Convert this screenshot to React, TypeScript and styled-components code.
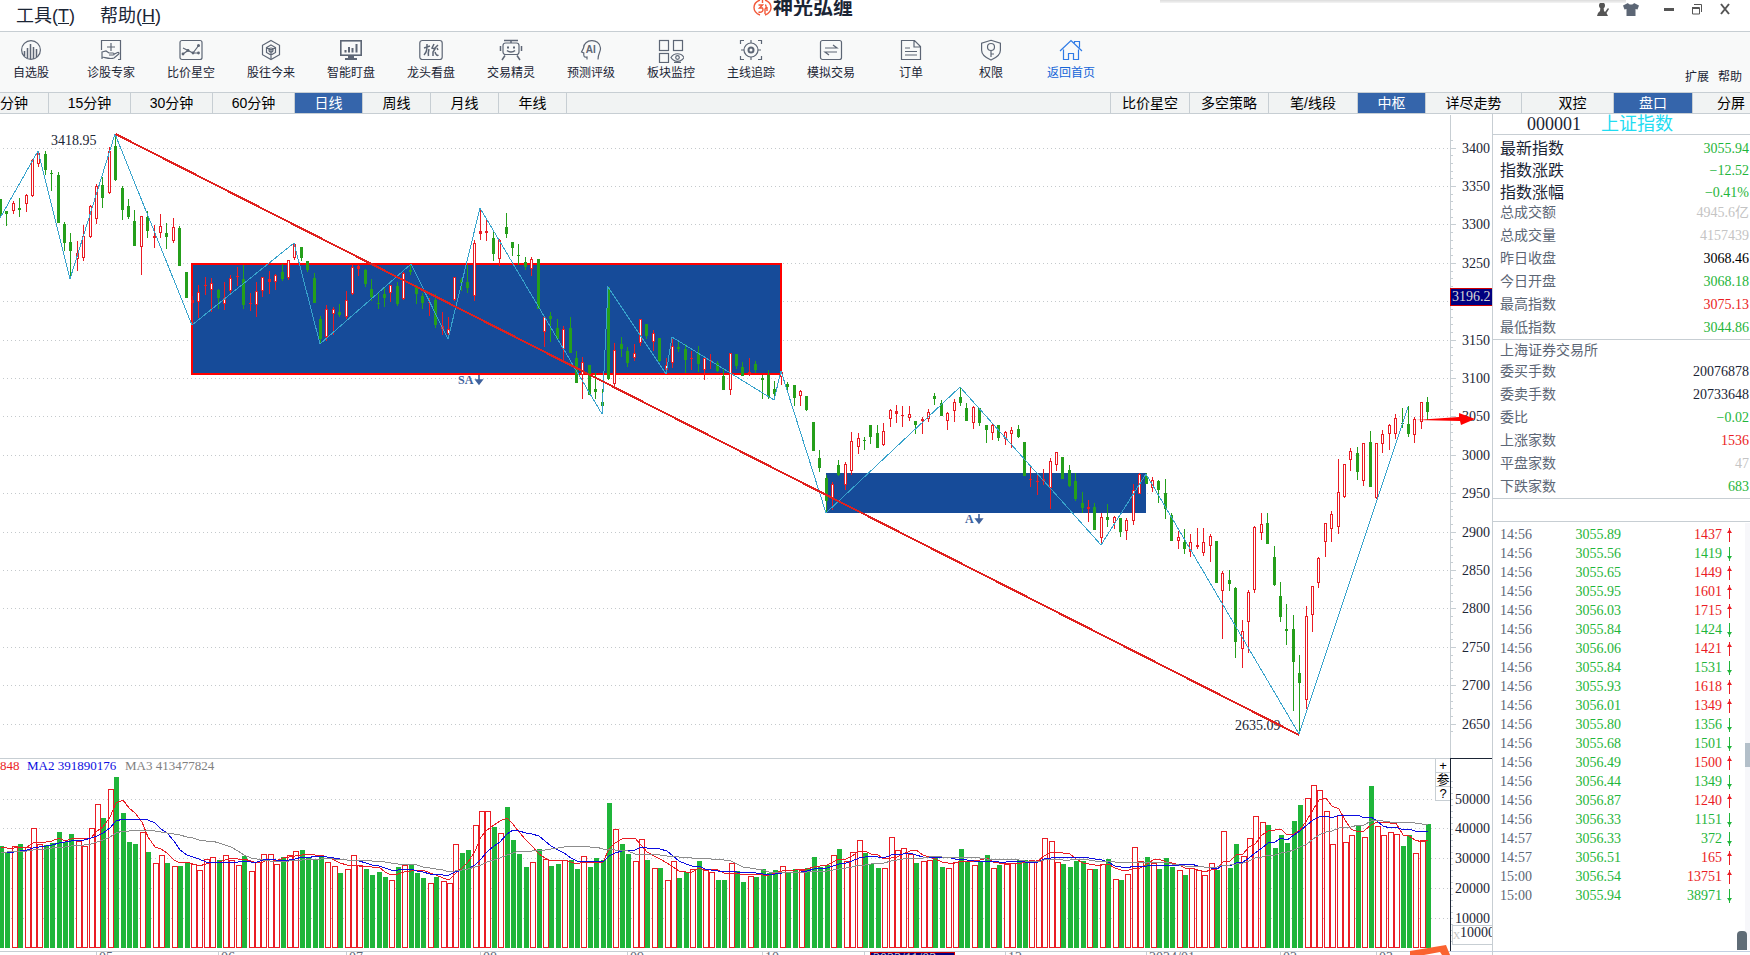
import React from "react";
import styled, { createGlobalStyle, css } from "styled-components";

const color = {
  line: "#c7ced3",
  ink: "#1b2535",
  muted: "#5c6675",
  faint: "#c4c4c4",
  up: "#ea1c24",
  down: "#1fb53a",
  candleDown: "#259f1b",
  active: "#3565ab",
  zone: "#164b99",
  stroke: "#38a3cc",
};

const sans = `"Liberation Sans", "Noto Sans CJK SC", sans-serif`;
const figures = `"Liberation Serif", "Noto Sans CJK SC", serif`;

const GlobalStyle = createGlobalStyle`
  html, body { margin: 0; padding: 0; background: #fff; }
  body { font-family: ${sans}; color: ${color.ink}; overflow: hidden; }
  button { font: inherit; color: inherit; background: none; border: 0; padding: 0; margin: 0; cursor: pointer; }
`;

/* ---------- market data: [up, high, body top, body bottom, low] in chart units ---------- */

type Candle = [number, number, number, number, number];

const candles: Candle[] = [
  [0,199,199,216,216],[0,211,211,214,226],[1,201,203,211,214],[0,198,208,210,217],[1,194,195,204,212],
  [1,159,160,196,197],[1,151,153,164,167],[0,151,154,170,175],[0,170,173,174,191],[0,172,175,223,223],
  [0,222,224,243,251],[0,233,242,251,277],[1,241,253,259,271],[1,225,236,258,261],[1,205,206,237,238],
  [1,184,186,219,224],[0,177,185,198,208],[1,147,151,193,194],[0,134,146,180,181],[0,186,188,210,220],
  [0,199,206,217,219],[0,210,221,246,246],[1,216,216,247,275],[0,211,217,231,238],[1,225,236,238,248],
  [1,214,226,233,238],[0,223,233,237,249],[1,218,227,241,243],[0,226,228,266,266],[0,272,272,298,298],
  [1,296,300,303,323],[1,285,292,302,318],[1,277,285,286,295],[1,278,283,290,312],[0,289,290,298,309],
  [1,282,298,304,310],[1,275,278,291,293],[1,267,276,277,286],[0,265,279,305,309],[1,293,303,304,311],
  [1,282,291,305,317],[1,277,277,291,297],[1,271,279,282,294],[1,274,275,282,290],[0,264,272,279,281],
  [1,260,260,278,280],[1,243,244,258,260],[0,247,247,258,261],[0,261,261,270,272],[0,273,278,303,303],
  [0,316,319,339,343],[1,305,309,337,341],[1,307,309,314,335],[0,304,312,315,317],[1,291,300,317,319],
  [1,265,267,294,295],[1,265,266,269,276],[0,269,270,284,287],[0,279,289,297,301],[0,293,303,304,309],
  [0,288,294,298,307],[1,285,285,293,302],[0,282,286,304,306],[1,272,273,299,300],[0,264,270,272,275],
  [0,285,287,294,304],[0,293,296,303,309],[1,298,302,303,316],[0,294,300,325,328],[1,312,326,329,335],
  [1,317,329,334,338],[1,277,277,300,301],[0,278,280,283,291],[0,265,282,288,293],[1,240,243,296,301],
  [1,209,231,234,240],[1,220,231,233,241],[0,231,238,254,261],[1,239,240,259,266],[0,213,227,234,238],
  [0,242,242,248,256],[0,244,255,256,265],[0,257,262,267,270],[1,257,259,269,276],[0,259,259,309,309],
  [1,316,317,332,347],[0,312,316,319,342],[0,319,328,339,340],[1,326,329,349,361],[0,317,328,353,353],
  [0,351,358,383,383],[1,357,362,375,399],[0,365,365,395,395],[0,373,389,392,399],[0,389,402,406,413],
  [0,287,287,379,380],[1,343,350,384,386],[0,337,344,349,357],[0,347,351,363,367],[1,344,353,358,361],
  [1,319,319,343,346],[0,324,324,336,339],[1,330,333,342,351],[0,338,338,361,362],[1,358,365,370,374],
  [1,339,346,363,368],[0,340,347,349,352],[0,344,349,360,373],[1,351,358,359,370],[0,346,353,364,372],
  [1,357,358,370,380],[1,354,360,361,369],[0,361,363,371,372],[0,369,376,390,390],[1,353,353,390,395],
  [0,354,354,366,369],[0,362,367,376,376],[1,358,372,375,376],[0,361,364,370,373],[0,375,378,380,399],
  [0,370,375,397,399],[0,381,389,394,400],[1,371,372,377,385],[0,382,384,387,393],[0,385,385,398,406],
  [1,390,391,396,406],[0,396,396,410,411],[0,422,422,451,451],[0,450,458,468,472],[0,475,478,501,513],
  [1,482,484,498,510],[0,460,465,475,476],[1,462,464,485,490],[1,432,441,471,475],[1,433,438,447,454],
  [0,437,440,441,450],[0,425,425,437,444],[0,425,433,448,448],[1,423,431,445,446],[1,409,410,419,427],
  [1,405,411,414,423],[1,406,415,416,427],[1,406,414,418,421],[0,421,421,425,434],[1,417,419,421,434],
  [1,409,412,419,422],[0,393,396,399,405],[0,400,403,416,416],[1,412,413,421,430],[1,399,402,411,422],
  [0,387,397,403,406],[0,403,408,421,421],[1,406,407,423,429],[0,408,408,423,426],[0,425,425,430,443],
  [1,424,425,433,440],[0,425,425,438,441],[1,431,432,439,445],[1,427,430,434,448],[0,425,429,437,438],
  [0,442,442,476,476],[1,466,479,480,487],[1,473,481,482,495],[1,469,479,481,485],[1,458,461,488,509],
  [1,452,452,465,471],[0,457,457,479,479],[0,465,470,486,487],[0,473,481,499,501],[0,492,503,508,513],
  [1,500,507,509,522],[0,503,507,530,530],[1,513,517,538,545],[0,504,517,520,527],[1,516,517,523,529],
  [0,518,518,532,537],[1,518,520,531,540],[1,484,490,521,525],[1,473,474,494,494],[0,473,476,484,484],
  [1,477,480,488,492],[0,480,481,490,503],[0,479,493,509,519],[0,513,515,541,541],[1,531,537,541,549],
  [0,529,542,549,554],[1,534,542,552,557],[1,528,545,547,549],[1,528,542,553,556],[1,534,536,546,562],
  [0,541,541,583,583],[1,571,573,591,639],[0,570,580,584,591],[0,587,588,642,658],[1,620,631,649,668],
  [1,590,592,622,653],[1,526,527,590,593],[1,513,524,533,540],[0,513,523,544,544],[0,546,557,585,586],
  [0,582,596,617,622],[0,604,629,631,645],[0,615,629,662,711],[0,655,673,683,734],[1,606,616,700,709],
  [1,586,586,615,632],[1,557,558,583,588],[1,523,523,542,557],[1,511,514,529,542],[1,459,492,527,534],
  [1,464,464,497,498],[1,448,451,460,471],[0,447,453,472,480],[1,443,443,481,486],[0,431,442,487,487],
  [1,443,443,498,499],[1,430,434,444,453],[1,424,425,434,450],[1,414,418,434,439],[0,408,423,424,428],
  [0,406,424,434,437],[1,417,419,435,443],[1,402,402,422,429],[0,397,402,412,420],
];

const volumeTops = [
  846,852,846,844,847,828,844,845,843,832,842,834,841,846,828,804,818,789,777,813,
  842,844,832,852,863,855,863,866,866,862,864,870,859,857,860,855,860,865,856,871,
  862,854,854,864,857,855,851,850,858,859,856,862,866,873,869,855,865,869,875,872,
  877,880,867,865,865,873,878,883,877,881,883,844,853,850,825,811,811,827,833,807,
  840,854,867,862,849,859,866,864,860,860,869,856,867,858,860,803,829,844,854,861,
  839,860,868,868,880,861,878,872,869,861,870,872,880,880,863,871,882,876,877,869,
  873,870,866,872,869,870,868,857,867,865,855,849,861,852,840,853,864,868,868,837,
  850,848,854,863,861,860,857,867,868,862,849,862,865,861,855,868,865,864,863,860,
  860,860,860,838,841,862,864,867,861,861,869,869,864,859,879,880,874,847,861,857,
  863,869,858,867,870,875,868,870,875,863,870,831,868,844,856,838,816,822,825,848,
  835,843,821,805,798,785,790,811,844,815,842,835,825,837,786,826,835,832,834,846,
  835,853,840,824,
];

const barX = (i: number) => Math.floor(0.4 + 6.4 * i);

const movingAverage = (span: number, before: number) =>
  volumeTops
    .map((_, i) => {
      let sum = 0;
      for (let k = i - span + 1; k <= i; k++) sum += k < 0 ? before : volumeTops[k];
      return `${barX(i) + 1},${Math.round(sum / span)}`;
    })
    .join(" ");

const swings =
  "0,218 38,151 70,279 115,134 192,325 294,243 320,344 411,264 448,339 480,208 602,414 608,287 666,374 672,337 774,400 781,371 826,513 960,387 1101,545 1146,474 1299,734 1408,407";

const PLOT_RIGHT = 1450;
const CHART_WIDTH = 1492;

/* ---------- page frame ---------- */

const Page = styled.div`
  display: flex;
  flex-direction: column;
  background: #fff;
`;

const TitleBar = styled.header`
  position: relative;
  display: grid;
  grid-template-columns: 1fr auto 1fr;
  height: 31px;
  border-bottom: 1px solid ${color.line};
`;

const Menu = styled.nav`
  display: flex;
  gap: 25px;
  padding-left: 16px;
  height: 28px;
  font-size: 18px;
`;

const Brand = styled.div`
  display: flex;
  align-items: center;
  height: 16px;
  margin-right: 144px;
  overflow: hidden;
  font-size: 20px;
  font-weight: 700;
  line-height: 16px;
  svg { margin-right: 1px; flex: none; }
`;

const WindowControls = styled.div`
  display: flex;
  justify-content: flex-end;
  align-items: center;
  height: 17px;
  padding-right: 11px;
  button { display: flex; justify-content: center; width: 28px; }
`;

const ControlGap = styled.span`
  width: 10px;
`;

const TopShadow = styled.div`
  position: absolute;
  top: 0;
  left: 1160px;
  right: 124px;
  height: 3px;
  background: linear-gradient(#dcdcdc, #f4f4f4);
`;

const Toolbar = styled.div`
  display: flex;
  height: 60px;
  background: #f8f9f9;
  border-bottom: 1px solid ${color.line};
  overflow: hidden;
`;

const ToolList = styled.div`
  display: flex;
  flex: 1;
  margin-left: -9px;
`;

const Tool = styled.button<{ $accent?: boolean }>`
  display: flex;
  flex-direction: column;
  align-items: center;
  flex: none;
  width: 80px;
  height: 60px;
  font-size: 12px;
  line-height: 18px;
  padding-top: 7px;
  color: ${(p) => (p.$accent ? "#1565d8" : color.ink)};
  svg { height: 24px; margin-bottom: 1px; color: ${(p) => (p.$accent ? "#2f7be6" : "#5d6675")}; }
`;

const ToolLinks = styled.div`
  display: flex;
  align-items: flex-end;
  gap: 9px;
  padding: 0 8px 7px 0;
  font-size: 12px;
  line-height: 16px;
`;

const TabBar = styled.div`
  display: flex;
  height: 20px;
  background: #f1f3f3;
  border-bottom: 1px solid ${color.line};
`;

const Tab = styled.button<{ $width: number; $active?: boolean; $edge?: "left" | "right"; $indent?: number }>`
  box-sizing: border-box;
  flex: none;
  width: ${(p) => p.$width}px;
  height: 20px;
  padding-left: ${(p) => p.$indent ?? 0}px;
  border-right: 1px solid ${color.line};
  font-size: 14px;
  line-height: 20px;
  white-space: nowrap;
  text-align: ${(p) => p.$edge ?? "center"};
  ${(p) => p.$edge === "right" && css`padding-right: 5px; border-right: 0;`}
  color: ${(p) => (p.$active ? "#fff" : "#000")};
  background: ${(p) => (p.$active ? color.active : "transparent")};
`;

const TabFill = styled.div`
  flex: 1;
  border-right: 1px solid ${color.line};
`;

const Workspace = styled.main`
  display: flex;
  align-items: stretch;
`;

const ChartColumn = styled.section`
  flex: 1;
  min-width: 0;
`;

const ChartSvg = styled.svg`
  display: block;
  width: 100%;
  height: auto;
  font-family: ${figures};
  font-size: 14px;
`;

const VolumePane = styled.div`
  position: relative;
`;

const PaneButtons = styled.div`
  position: absolute;
  top: 1px;
  right: 42px;
  width: 14px;
  display: flex;
  flex-direction: column;
  background: #fff;
  border-left: 1px solid ${color.line};
  button {
    height: 14px;
    border-bottom: 1px solid ${color.line};
    font-size: 13px;
    line-height: 13px;
    color: #000;
    overflow: hidden;
  }
`;

/* ---------- quote panel ---------- */

const Panel = styled.aside`
  position: relative;
  flex: none;
  box-sizing: border-box;
  width: 258px;
  border-left: 1px solid ${color.line};
  font-family: ${figures};
`;

const Symbol = styled.h1`
  display: flex;
  gap: 20px;
  margin: 0;
  padding-left: 34px;
  height: 20px;
  border-bottom: 1px solid ${color.line};
  font-size: 18px;
  font-weight: 400;
  line-height: 20px;
  span { color: #1fdcf2; }
`;

const Quotes = styled.table`
  width: 100%;
  border-collapse: collapse;
  border-bottom: 1px solid ${color.line};
  font-size: 14px;
`;

type Tone = "up" | "down" | "ink" | "faint" | "black";
const toneColor = (t: Tone) => (t === "black" ? "#000" : color[t]);

const QuoteRow = styled.tr<{ $lead?: boolean; $short?: boolean }>`
  th, td {
    padding: ${(p) => (p.$lead ? "5px 1px 0 7px" : "0 1px 0 7px")};
    height: ${(p) => (p.$lead ? 17 : p.$short ? 20 : 23)}px;
    line-height: 17px;
    vertical-align: middle;
  }
  th {
    font-weight: 400;
    text-align: left;
    font-size: ${(p) => (p.$lead ? 16 : 14)}px;
    color: ${(p) => (p.$lead ? color.ink : color.muted)};
  }
`;

const Value = styled.td<{ $tone: Tone }>`
  text-align: right;
  color: ${(p) => toneColor(p.$tone)};
`;

const Spacer = styled.div`
  height: 22px;
  border-bottom: 1px solid ${color.line};
`;

const Trades = styled.table`
  margin: 3px 0 0 7px;
  border-collapse: collapse;
  table-layout: fixed;
  width: 236px;
  font-size: 14px;
  td { padding: 0; height: 19px; line-height: 18px; }
  svg { display: block; margin-left: 5px; }
`;

const Time = styled.td`
  width: 60px;
  color: ${color.muted};
`;

const Price = styled.td`
  width: 61px;
  text-align: right;
  color: ${color.down};
`;

const Lots = styled.td<{ $up: boolean }>`
  width: 101px;
  text-align: right;
  color: ${(p) => (p.$up ? color.up : color.down)};
`;

const ScrollTrack = styled.div`
  position: absolute;
  top: 409px;
  right: 0;
  bottom: 5px;
  width: 5px;
  background: #f7f7fa;
`;

const ScrollThumb = styled.div`
  margin-top: 220px;
  height: 24px;
  background: #b3bfc9;
`;

const Grip = styled.div`
  position: absolute;
  right: 3px;
  bottom: 5px;
  width: 10px;
  height: 19px;
  border-radius: 4px 4px 0 0;
  background: #5f6c76;
`;

const PanelFoot = styled.div`
  position: absolute;
  left: 0;
  right: 0;
  bottom: 3px;
  height: 1px;
  background: #c3cfe2;
`;

/* ---------- icons ---------- */

const Glyph = ({ children, w = 24 }: { children: React.ReactNode; w?: number }) => (
  <svg width={w} height="24" viewBox={`0 0 ${w} 24`} fill="none" stroke="currentColor" strokeWidth="1.2" aria-hidden="true">
    {children}
  </svg>
);

const icons: Record<string, React.ReactNode> = {
  stocks: (
    <Glyph>
      <circle cx="12" cy="11" r="9.4" />
      <path d="M5.500 17V12M8.500 19V9M11.500 20V5M14.500 20V8M17.500 18V10" strokeWidth="1.500" />
    </Glyph>
  ),
  doctor: (
    <Glyph>
      <path d="M2.500 11V1.500H21.500V20.500H19M12 4v8M8 8h8" />
      <path d="M3 12.500V20M3 13l4-1 3 2h4c1.500 0 1.500 2 0 2h-4M14.500 15.500l4-2c1.500-.3 2 1 1 1.800l-4.500 3.700c-4 1.500-8-.3-12-1" />
    </Glyph>
  ),
  compare: (
    <Glyph>
      <rect x="1" y="1.500" width="22" height="19" rx="2" />
      <path d="M4 15l5-3.500 5 2.500 6-8M4 9l5 2.500M14 14h6" />
      <g fill="currentColor" stroke="none">
        <circle cx="4" cy="15" r="1.400" /><circle cx="9" cy="11.500" r="1.400" /><circle cx="14" cy="14" r="1.400" />
        <circle cx="19.500" cy="6.500" r="1.500" /><circle cx="19.500" cy="14" r="1.400" />
      </g>
    </Glyph>
  ),
  cube: (
    <Glyph>
      <path d="M12 1.500l8.500 4.800v9.400L12 20.500l-8.500-4.800V6.300z" />
      <path d="M12 6l4.500 2.500v5L12 16l-4.500-2.500v-5zM7.500 8.500L12 11l4.500-2.500M12 11v9" />
      <circle cx="12" cy="11" r="2" />
    </Glyph>
  ),
  monitor: (
    <Glyph>
      <rect x="1.800" y="1.800" width="20.400" height="14.400" strokeWidth="1.600" />
      <path d="M6.500 13.500V11M10 13.500V8M13.500 13.500V9M17.500 13.500V5" strokeWidth="2" />
      <path d="M9 17h6v2h3v2H6v-2h3z" fill="currentColor" stroke="none" />
    </Glyph>
  ),
  dragon: (
    <Glyph>
      <rect x="0.800" y="1.500" width="22.400" height="19" rx="2.500" />
      <path d="M5 9l6-2M8 5c0 5 0 8-3 11M10 10c-.5 2-1 5-.5 7M15 5l-2 4 3 1-2 3v4M19 6l-4 4M16 13c1 3 2 4 3.500 3M18 9l1 2" strokeWidth="1.500" />
    </Glyph>
  ),
  robot: (
    <Glyph>
      <rect x="4" y="4" width="16" height="11.500" rx="2.500" />
      <path d="M5 1.500h14M12 1.500V4M1.500 7v5M22.500 7v5M6 16.500L3 21M18 16.500l3 4.500M8 11.500c2 2 6 2 8 0" strokeWidth="1.500" />
      <path d="M8 8.500h2M14 8.500h2" strokeWidth="2" />
    </Glyph>
  ),
  ai: (
    <Glyph>
      <path d="M8 20.500v-2.500c-3 .5-3.500-.5-3.200-4L2.500 13l2-4c0-9 16-10.500 17 0 .3 4-2.500 5-2.500 11.500" />
      <text x="11.800" y="14" textAnchor="middle" fontSize="10" fontWeight="700" fontFamily="Liberation Sans, sans-serif" fill="currentColor" stroke="none">AI</text>
    </Glyph>
  ),
  blocks: (
    <Glyph w={26}>
      <rect x="1.500" y="1.500" width="9" height="10" /><rect x="15.500" y="1.500" width="9" height="10" /><rect x="1.500" y="14.500" width="9" height="9" />
      <path d="M13 18.500c3-5 10-5 13 0-3 5-10 5-13 0zM16 23.400h7" />
      <circle cx="19.500" cy="18.500" r="1.800" />
    </Glyph>
  ),
  track: (
    <Glyph>
      <path d="M1.500 5V1.500H5M19 1.500h3.500V5M22.500 17v3.500H19M5 20.500H1.500V17M12 1v3M12 18v3M2 11h3M19 11h3" />
      <circle cx="12" cy="11" r="7" /><circle cx="12" cy="11" r="2.500" strokeWidth="2" />
    </Glyph>
  ),
  trade: (
    <Glyph>
      <rect x="1.500" y="1.500" width="21" height="19" rx="2" />
      <path d="M6 9h12l-4-3M18 13H6l4 3" />
    </Glyph>
  ),
  order: (
    <Glyph>
      <path d="M2.500 1.500h13l6 6v13h-19zM15 2v6h6M6 9h5M6 12.500h12M6 16h12" />
    </Glyph>
  ),
  shield: (
    <Glyph>
      <path d="M12 1.300l9.400 3v7c0 5-4 7.500-9.400 9.700-5.400-2.200-9.400-4.700-9.400-9.700v-7z" />
      <circle cx="12" cy="8" r="3.500" /><path d="M12 11.500V18M12 15h3" />
    </Glyph>
  ),
  home: (
    <Glyph>
      <path d="M1 12L12 1.500 23 12M4.500 10.500v10h5V14.500h5v6h5v-10M15.500 4V2.500H20.500V8.500" />
    </Glyph>
  ),
};

const tools: [string, string][] = [
  ["stocks", "自选股"], ["doctor", "诊股专家"], ["compare", "比价星空"], ["cube", "股往今来"],
  ["monitor", "智能盯盘"], ["dragon", "龙头看盘"], ["robot", "交易精灵"], ["ai", "预测评级"],
  ["blocks", "板块监控"], ["track", "主线追踪"], ["trade", "模拟交易"], ["order", "订单"],
  ["shield", "权限"], ["home", "返回首页"],
];

/* ---------- charts ---------- */

const axisPrices = Array.from({ length: 16 }, (_, i) => 3400 - i * 50);
const priceY = (p: number) => Math.floor(148 + (3400 - p) * 0.768);
const axisVolumes = [50000, 40000, 30000, 20000, 10000];
const volumeY = (v: number) => Math.floor(799 + (50000 - v) * 0.00298);

const DownMark = ({ x, y }: { x: number; y: number }) => (
  <path d={`M${x} ${y}v8M${x - 3} ${y + 5}h6l-3 4z`} stroke="#3f629d" strokeWidth="1.600" fill="#3f629d" />
);

const PriceChart = () => (
  <ChartSvg viewBox={`0 114 ${CHART_WIDTH} 644`} role="img" aria-label="上证指数 日线">
    <g shapeRendering="crispEdges">
      {axisPrices.map((p) => (
        <line key={p} x1="3" x2={PLOT_RIGHT} y1={priceY(p) + 0.5} y2={priceY(p) + 0.5} stroke="#c4c9cc" strokeDasharray="1 3" />
      ))}
      <rect x="192" y="264" width="589" height="110" fill={color.zone} stroke="#ff0000" strokeWidth="2" />
      <rect x="826" y="473" width="320" height="40" fill={color.zone} />
      {candles.map(([up, high, top, bottom, low], i) => {
        const x = barX(i);
        const tone = up ? color.up : color.candleDown;
        return (
          <g key={i} fill={tone}>
            <rect x={x} y={high} width="1" height={Math.max(1, low - high)} />
            <rect x={x - 1} y={top} width="3" height={Math.max(1, bottom - top)} />
            {up === 1 && bottom - top > 3 && <rect x={x} y={top + 1} width="1" height={bottom - top - 2} fill="#fff" />}
          </g>
        );
      })}
      <polyline points={swings} fill="none" stroke={color.stroke} />
      <line x1="1450.500" x2="1450.500" y1="115" y2="758" stroke={color.line} />
      {Array.from({ length: 78 }, (_, i) => Math.round(140 + i * 7.68)).map((y) => (
        <line key={y} x1="1451" x2="1453" y1={y + 0.5} y2={y + 0.5} stroke={color.line} />
      ))}
      {axisPrices.map((p) => (
        <line key={p} x1="1451" x2="1456" y1={priceY(p) + 0.5} y2={priceY(p) + 0.5} stroke={color.line} />
      ))}
    </g>
    <g fill={color.ink}>
      <text x="51" y="145">3418.95</text>
      <text x="1235" y="730">2635.09</text>
      {axisPrices.filter((p) => p !== 3200).map((p) => (
        <text key={p} x="1490" y={priceY(p) + 5} textAnchor="end">{p}</text>
      ))}
    </g>
    <g fill="#3f629d" fontSize="12" fontWeight="700">
      <text x="458" y="384">SA</text>
      <text x="965" y="523">A</text>
    </g>
    <DownMark x={479} y={375} />
    <DownMark x={979} y={514} />
    <line x1="115.500" y1="134" x2="1299" y2="735" stroke="#e0211f" strokeWidth="2" shapeRendering="crispEdges" />
    <rect x="1450.500" y="288.500" width="44" height="17" fill="#000080" stroke="#d00000" shapeRendering="crispEdges" />
    <text x="1452" y="301" fill="#d6d6d6">3196.2</text>
    <path d="M1416 420l43-3v-4l16 6-14 6-1-4z" fill="#ff0000" />
  </ChartSvg>
);

const months: [number, string][] = [
  [96, "05"], [218, "06"], [346, "07"], [480, "08"], [627, "09"], [762, "10"], [864, ""],
  [1005, "12"], [1146, "2024/01"], [1280, "02"], [1376, "03"],
];

const VolumeChart = () => (
  <ChartSvg viewBox={`0 758 ${CHART_WIDTH} 197`} role="img" aria-label="成交量">
    <g shapeRendering="crispEdges">
      <line x1="0" x2={PLOT_RIGHT} y1="758.500" y2="758.500" stroke={color.line} />
      {axisVolumes.map((v) => (
        <line key={v} x1="3" x2={PLOT_RIGHT} y1={volumeY(v) + 0.5} y2={volumeY(v) + 0.5} stroke="#c4c9cc" strokeDasharray="1 3" />
      ))}
      {volumeTops.map((top, i) =>
        candles[i][0] ? (
          <rect key={i} x={barX(i) - 0.5} y={top + 0.5} width="5" height={947 - top} fill="#fff" stroke={color.up} />
        ) : (
          <rect key={i} x={barX(i) - 1} y={top} width="5" height={948 - top} fill={color.down} />
        )
      )}
      <g fill="none">
        <polyline points={movingAverage(5, 847)} stroke={color.up} />
        <polyline points={movingAverage(10, 853)} stroke="#0d0de0" />
        <polyline points={movingAverage(20, 852)} stroke="#8c8c8c" />
      </g>
      <line x1="0" x2={PLOT_RIGHT} y1="951.500" y2="951.500" stroke={color.line} />
      {months.map(([x]) => (
        <line key={x} x1={x + 0.5} x2={x + 0.5} y1="951" y2="955" stroke={color.line} />
      ))}
      <path d="M1450.500 951V758.500H1492" fill="none" stroke={color.ink} />
      {Array.from({ length: 28 }, (_, i) => Math.round(781 + i * 5.94)).map((y) => (
        <line key={y} x1="1451" x2="1453" y1={y + 0.5} y2={y + 0.5} stroke={color.line} />
      ))}
      <rect x="1452.500" y="925.500" width="44" height="19" fill="#fff" stroke={color.line} />
      <line x1="1408" x2="1492" y1="951.500" y2="951.500" stroke="#c3cfe2" />
    </g>
    <g fontSize="13">
      <text x="0" y="770" fill={color.up}>848</text>
      <text x="27" y="770" fill="#0d0de0">MA2 391890176</text>
      <text x="125" y="770" fill="#808080">MA3 413477824</text>
    </g>
    <g fill={color.ink}>
      {axisVolumes.map((v) => (
        <text key={v} x="1490" y={volumeY(v) + 5} textAnchor="end">{v}</text>
      ))}
      <text x="1460" y="937">10000</text>
    </g>
    <text x="1453" y="939" fill="#c4c4c4" fontSize="10">X</text>
    <g fill={color.muted}>
      {months.filter(([, label]) => label).map(([x, label]) => (
        <text key={x} x={x + 3} y="962">{label}</text>
      ))}
    </g>
    <rect x="870.500" y="952.500" width="84" height="17" fill="#000080" stroke="#d00000" shapeRendering="crispEdges" />
    <text x="873" y="963" fill="#d6d6d6">2023/11/03</text>
    <path d="M1410 951l36-6 4 10h-40z" fill="#fa6330" />
    <path d="M1424 955l16-3 2 3z" fill="#fff" />
  </ChartSvg>
);

/* ---------- panel data ---------- */

const lead: [string, string, Tone][] = [
  ["最新指数", "3055.94", "down"], ["指数涨跌", "−12.52", "down"], ["指数涨幅", "−0.41%", "down"],
];
const summary: [string, string, Tone][] = [
  ["总成交额", "4945.6亿", "faint"], ["总成交量", "4157439", "faint"], ["昨日收盘", "3068.46", "black"],
  ["今日开盘", "3068.18", "down"], ["最高指数", "3075.13", "up"], ["最低指数", "3044.86", "down"],
];
const exchange: [string, string, Tone][] = [
  ["委买手数", "20076878", "ink"], ["委卖手数", "20733648", "ink"], ["委比", "−0.02", "down"],
  ["上涨家数", "1536", "up"], ["平盘家数", "47", "faint"], ["下跌家数", "683", "down"],
];
const trades: [string, string, number, boolean][] = [
  ["14:56", "3055.89", 1437, true], ["14:56", "3055.56", 1419, false], ["14:56", "3055.65", 1449, true],
  ["14:56", "3055.95", 1601, true], ["14:56", "3056.03", 1715, true], ["14:56", "3055.84", 1424, false],
  ["14:56", "3056.06", 1421, true], ["14:56", "3055.84", 1531, false], ["14:56", "3055.93", 1618, true],
  ["14:56", "3056.01", 1349, true], ["14:56", "3055.80", 1356, false], ["14:56", "3055.68", 1501, false],
  ["14:56", "3056.49", 1500, true], ["14:56", "3056.44", 1349, false], ["14:56", "3056.87", 1240, true],
  ["14:56", "3056.33", 1151, false], ["14:57", "3056.33", 372, false], ["14:57", "3056.51", 165, true],
  ["15:00", "3056.54", 13751, true], ["15:00", "3055.94", 38971, false],
];

const Arrow = ({ up }: { up: boolean }) => (
  <svg width="5" height="14" viewBox="0 0 5 14" fill={up ? color.up : color.down} aria-hidden="true">
    <path d={up ? "M2 0h1v2l2 3H3v9H2V5H0l2-3z" : "M2 14h1v-2l2-3H3V0H2v9H0l2 3z"} />
  </svg>
);

const rows = (list: [string, string, Tone][], isLead = false) =>
  list.map(([label, value, tone]) => (
    <QuoteRow key={label} $lead={isLead}>
      <th scope="row">{label}</th>
      <Value $tone={tone}>{value}</Value>
    </QuoteRow>
  ));

export default function App() {
  return (
    <Page>
      <GlobalStyle />
      <TitleBar>
        <Menu>
          <button type="button">工具(<u>T</u>)</button>
          <button type="button">帮助(<u>H</u>)</button>
        </Menu>
        <Brand>
          <svg width="19" height="18" viewBox="0 0 19 18" fill="none" stroke="#f2593a" strokeWidth="1.400" aria-hidden="true">
            <path d="M7 1C-1 4-1 13 7 16M12 1c8 3 8 12 0 15M9.500 1v3M5.500 6h4l-3 3h3c1.500 3-1 5-4 4M12 6c1.500 0 1.500 3 0 4v5M14 8v4" />
          </svg>
          神光弘缠
        </Brand>
        <WindowControls>
          <button type="button" aria-label="用户">
            <svg width="14" height="14" viewBox="0 0 14 14" fill="#555" aria-hidden="true">
              <circle cx="6" cy="3.500" r="3" /><path d="M4.500 5h3l.5 4 1 1 3-4 1 1-2.500 4 1.500 3H1l1-3 2-2z" />
            </svg>
          </button>
          <button type="button" aria-label="皮肤">
            <svg width="16" height="14" viewBox="0 0 16 14" fill="#5c6675" aria-hidden="true">
              <path d="M5 1c1 2 5 2 6 0l5 2.500-1.500 4L12.500 7v7h-9V7l-2 .5L0 3.500z" />
            </svg>
          </button>
          <ControlGap />
          <button type="button" aria-label="最小化">
            <svg width="12" height="12" viewBox="0 0 12 12" fill="#555" aria-hidden="true"><path d="M1 5h10v3H1z" /></svg>
          </button>
          <button type="button" aria-label="还原">
            <svg width="12" height="12" viewBox="0 0 12 12" fill="none" stroke="#555" aria-hidden="true">
              <path d="M3 1.500h7.500V9M1 4.500h7.500v6.500H1.500V4M1 5.500h8" />
            </svg>
          </button>
          <button type="button" aria-label="关闭">
            <svg width="12" height="12" viewBox="0 0 12 12" stroke="#555" strokeWidth="2" aria-hidden="true">
              <path d="M2 1l8 10M10 1L2 11" />
            </svg>
          </button>
        </WindowControls>
        <TopShadow />
      </TitleBar>

      <Toolbar>
        <ToolList>
          {tools.map(([icon, label]) => (
            <Tool key={icon} type="button" $accent={icon === "home"}>
              {icons[icon]}
              {label}
            </Tool>
          ))}
        </ToolList>
        <ToolLinks>
          <button type="button">扩展</button>
          <button type="button">帮助</button>
        </ToolLinks>
      </Toolbar>

      <TabBar>
        <Tab type="button" $width={49} $edge="left">分钟</Tab>
        <Tab type="button" $width={82}>15分钟</Tab>
        <Tab type="button" $width={82}>30分钟</Tab>
        <Tab type="button" $width={82}>60分钟</Tab>
        <Tab type="button" $width={68} $active>日线</Tab>
        <Tab type="button" $width={68}>周线</Tab>
        <Tab type="button" $width={68}>月线</Tab>
        <Tab type="button" $width={68}>年线</Tab>
        <TabFill />
        <Tab type="button" $width={79}>比价星空</Tab>
        <Tab type="button" $width={79}>多空策略</Tab>
        <Tab type="button" $width={89}>笔/线段</Tab>
        <Tab type="button" $width={68} $active>中枢</Tab>
        <Tab type="button" $width={96}>详尽走势</Tab>
        <Tab type="button" $width={92} $indent={10}>双控</Tab>
        <Tab type="button" $width={79} $active>盘口</Tab>
        <Tab type="button" $width={57} $edge="right">分屏</Tab>
      </TabBar>

      <Workspace>
        <ChartColumn>
          <PriceChart />
          <VolumePane>
            <VolumeChart />
            <PaneButtons>
              <button type="button">+</button>
              <button type="button">参</button>
              <button type="button">?</button>
            </PaneButtons>
          </VolumePane>
        </ChartColumn>
        <Panel>
          <Symbol>000001<span>上证指数</span></Symbol>
          <Quotes>
            <tbody>
              {rows(lead, true)}
              {rows(summary)}
            </tbody>
          </Quotes>
          <Quotes>
            <tbody>
              <QuoteRow $short>
                <th scope="row" colSpan={2}>上海证券交易所</th>
              </QuoteRow>
              {rows(exchange)}
            </tbody>
          </Quotes>
          <Spacer />
          <Trades>
            <tbody>
              {trades.map(([time, price, lots, up], i) => (
                <tr key={i}>
                  <Time>{time}</Time>
                  <Price>{price}</Price>
                  <Lots $up={up}>{lots}</Lots>
                  <td><Arrow up={up} /></td>
                </tr>
              ))}
            </tbody>
          </Trades>
          <ScrollTrack><ScrollThumb /></ScrollTrack>
          <Grip />
          <PanelFoot />
        </Panel>
      </Workspace>
    </Page>
  );
}
